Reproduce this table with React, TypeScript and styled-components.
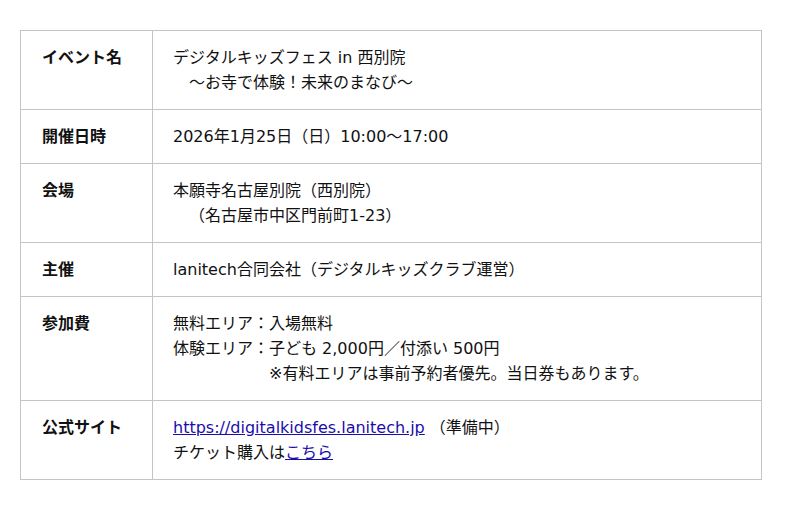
import styled, { createGlobalStyle } from "styled-components";

const GlobalStyle = createGlobalStyle`
  body {
    margin: 0;
    background: #fff;
    font-family: "DejaVu Sans", "Noto Sans CJK JP", sans-serif;
    color: #111;
  }
`;

const Page = styled.div`
  padding: 30px 38px 0 20px;
`;

const Table = styled.table`
  width: 742px;
  border-collapse: collapse;
  font-size: 16px;
  line-height: 25px;
`;

const Label = styled.th`
  width: 90px;
  padding: 14px 20px 14px 21px;
  border: 1px solid #c4c4c4;
  text-align: left;
  vertical-align: top;
  font-weight: bold;
`;

const Value = styled.td`
  padding: 14px 20px;
  border: 1px solid #c4c4c4;
  vertical-align: top;
`;

const Line = styled.div<{ $indent?: number }>`
  padding-left: ${(p) => p.$indent ?? 0}px;
`;

const Anchor = styled.a`
  color: #1a0dab;
  text-decoration: underline;
`;

export default function App() {
  return (
    <Page>
      <GlobalStyle />
      <Table>
        <tbody>
          <tr>
            <Label>イベント名</Label>
            <Value>
              <Line>デジタルキッズフェス in 西別院</Line>
              <Line $indent={16}>～お寺で体験！未来のまなび～</Line>
            </Value>
          </tr>
          <tr>
            <Label>開催日時</Label>
            <Value>2026年1月25日（日）10:00～17:00</Value>
          </tr>
          <tr>
            <Label>会場</Label>
            <Value>
              <Line>本願寺名古屋別院（西別院）</Line>
              <Line $indent={16}>（名古屋市中区門前町1-23）</Line>
            </Value>
          </tr>
          <tr>
            <Label>主催</Label>
            <Value>lanitech合同会社（デジタルキッズクラブ運営）</Value>
          </tr>
          <tr>
            <Label>参加費</Label>
            <Value>
              <Line>無料エリア：入場無料</Line>
              <Line>体験エリア：子ども 2,000円／付添い 500円</Line>
              <Line $indent={96}>※有料エリアは事前予約者優先。当日券もあります。</Line>
            </Value>
          </tr>
          <tr>
            <Label>公式サイト</Label>
            <Value>
              <Line>
                <Anchor href="#">https://digitalkidsfes.lanitech.jp</Anchor> （準備中）
              </Line>
              <Line>
                チケット購入は<Anchor href="#">こちら</Anchor>
              </Line>
            </Value>
          </tr>
        </tbody>
      </Table>
    </Page>
  );
}
